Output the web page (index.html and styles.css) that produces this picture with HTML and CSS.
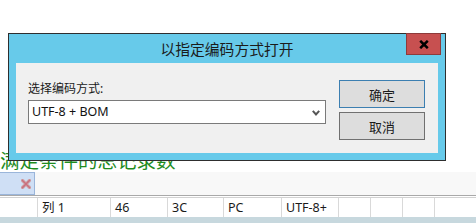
FILE: index.html
```html
<!DOCTYPE html>
<html lang="zh-CN">
<head>
<meta charset="utf-8">
<title>以指定编码方式打开</title>
<link rel="stylesheet" href="styles.css">
</head>
<body>
<div class="app">
  <div class="editor">
    <div class="result-text">满足条件的总记录数</div>
  </div>
  <div class="tabbar">
    <div class="tab">
      <svg class="tab-close" width="10" height="10" viewBox="0 0 10 10">
        <path d="M1.5 1.5 L8.5 8.5 M8.5 1.5 L1.5 8.5" stroke="#cfaeb3" stroke-width="3.6" stroke-linecap="square"/>
        <path d="M1.5 1.5 L8.5 8.5 M8.5 1.5 L1.5 8.5" stroke="#c9707e" stroke-width="1.6" stroke-linecap="square"/>
      </svg>
    </div>
  </div>
  <div class="statusbar">
    <div class="cell c0"></div>
    <div class="cell c1">列 1</div>
    <div class="cell c2">46</div>
    <div class="cell c3">3C</div>
    <div class="cell c4">PC</div>
    <div class="cell c5">UTF-8+</div>
    <div class="cell c6"></div>
    <div class="cell c7"></div>
    <div class="cell c8"></div>
    <div class="cell c9"></div>
  </div>
  <div class="bottomstrip"></div>

  <div class="dialog">
    <div class="titlebar">
      <span class="title">以指定编码方式打开</span>
      <div class="close">
        <svg width="10" height="9" viewBox="0 0 10 9">
          <path d="M1.2 0.8 L8.8 8.2 M8.8 0.8 L1.2 8.2" stroke="#000" stroke-width="2.5"/>
        </svg>
      </div>
    </div>
    <div class="client">
      <div class="left">
        <div class="label">选择编码方式:</div>
        <div class="select">
          <span class="select-value">UTF-8 + BOM</span>
          <svg class="chev" width="8" height="6" viewBox="0 0 8 6">
            <path d="M0.8 0.8 L4 4.4 L7.2 0.8" stroke="#555" stroke-width="2" fill="none"/>
          </svg>
        </div>
      </div>
      <div class="right">
        <div class="btn btn-default">确定</div>
        <div class="btn">取消</div>
      </div>
    </div>
  </div>
</div>
</body>
</html>
```
FILE: styles.css
```css
html, body {
  margin: 0;
  padding: 0;
  background: #ffffff;
}
body {
  font-family: "Noto Sans", "Noto Sans CJK SC", sans-serif;
  width: 476px;
  height: 223px;
  overflow: hidden;
}
.app {
  position: relative;
  width: 476px;
  height: 223px;
  display: flex;
  flex-direction: column;
}
.editor {
  height: 172px;
  display: flex;
  flex-direction: column;
  justify-content: flex-end;
  padding-bottom: 2px;
  box-sizing: border-box;
  background: #ffffff;
}
.result-text {
  font-family: "Noto Sans CJK SC", sans-serif;
  font-size: 19.5px;
  line-height: 20px;
  color: #1e8c1e;
  white-space: nowrap;
  margin-left: 0;
}
.tabbar {
  height: 23px;
  background: #f8f8f8;
  display: flex;
}
.tab {
  width: 35px;
  box-sizing: border-box;
  background: #cfdff5;
  border: 1px solid #9ab5da;
  border-left: none;
  display: flex;
  align-items: center;
  justify-content: flex-end;
  padding-right: 3px;
}
.tab-close {
  display: block;
}
.statusbar {
  height: 22px;
  box-sizing: border-box;
  border-top: 1px solid #a9a9a9;
  box-shadow: inset 0 1px 0 #ffffff, inset 0 2px 0 #d2d2d2;
  padding-top: 2px;
  background: #ffffff;
  display: flex;
  font-size: 12.5px;
  color: #1a1a1a;
}
.cell {
  box-sizing: border-box;
  border-right: 1px solid #d9d9d9;
  padding-left: 4px;
  line-height: 19px;
  white-space: nowrap;
}
.c0 { width: 38px; }
.c1 { width: 73px; }
.c2 { width: 57px; }
.c3 { width: 56px; }
.c4 { width: 58px; }
.c5 { width: 57px; }
.c6 { width: 32px; }
.c7 { width: 32px; }
.c8 { width: 32px; }
.c9 { flex: 1; border-right: none; }
.bottomstrip {
  flex: 1;
  background: #c7d8de;
}

/* dialog overlay */
.dialog {
  position: absolute;
  left: 8px;
  top: 33px;
  width: 438px;
  height: 128px;
  box-sizing: border-box;
  border: 1px solid #2e2e2e;
  background: #67caea;
  padding: 0 7px 7px 7px;
  display: flex;
  flex-direction: column;
}
.titlebar {
  position: relative;
  height: 29px;
  display: flex;
  align-items: center;
  justify-content: center;
}
.title {
  font-family: "Noto Sans CJK SC", sans-serif;
  font-size: 14.8px;
  color: #1b1b1b;
  line-height: 20px;
  margin-top: 1px;
}
.close {
  position: absolute;
  right: -3px;
  top: -1px;
  width: 35px;
  height: 22px;
  box-sizing: border-box;
  background: #c75050;
  border: 1px solid #8e3a3a;
  display: flex;
  align-items: center;
  justify-content: center;
}
.close svg { display: block; margin-top: 1px; }
.client {
  flex: 1;
  background: #f0f0f0;
  display: flex;
  padding: 17px 0 0 12px;
}
.left {
  width: 298px;
  display: flex;
  flex-direction: column;
}
.label {
  font-size: 12px;
  line-height: 16px;
  margin-top: 1px;
  color: #1a1a1a;
}
.select {
  margin-top: 3px;
  height: 24px;
  box-sizing: border-box;
  border: 1px solid #7a7a7a;
  background: #ffffff;
  display: flex;
  align-items: center;
  justify-content: space-between;
  padding: 0 5px 0 3px;
}
.select-value {
  font-size: 12.5px;
  color: #111;
  line-height: 16px;
}
.chev { display: block; margin-top: 1px; }
.right {
  margin-left: 13px;
  width: 86px;
  display: flex;
  flex-direction: column;
  gap: 4px;
}
.btn {
  height: 28px;
  box-sizing: border-box;
  border: 1px solid #707070;
  background: #dddddd;
  display: flex;
  align-items: center;
  justify-content: center;
  font-size: 13px;
  color: #1a1a1a;
}
.btn-default {
  border-color: #3c7fb1;
}
```
